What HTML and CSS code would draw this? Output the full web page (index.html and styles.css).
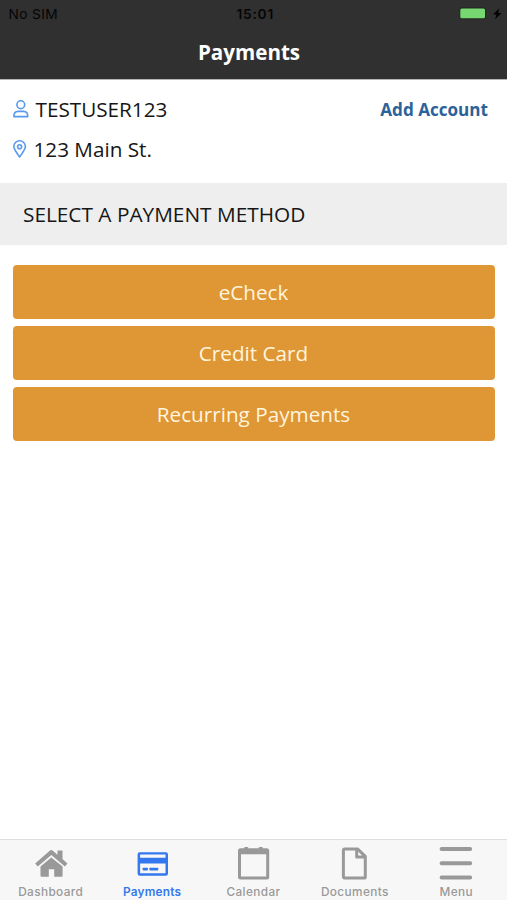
FILE: index.html
```html
<!DOCTYPE html>
<html lang="en">
<head>
<meta charset="utf-8">
<title>Payments</title>
<link rel="stylesheet" href="styles.css">
</head>
<body>
<div class="screen">
  <header class="header">
    <div class="status">
      <span class="carrier">No SIM</span>
      <span class="clock">15:01</span>
      <span class="power">
        <svg width="43" height="14" viewBox="0 0 43 14"><rect x="0" y="0" width="27" height="12.5" rx="3" fill="#252a25"/><rect x="1.3" y="1.5" width="24.7" height="9.7" rx="1.5" fill="#77d872"/><path d="M40.4 1.3 34 7.5h3.6l-1.5 4.8 6.4-6.3h-3.4z" fill="#000"/></svg>
      </span>
    </div>
    <h1 class="title">Payments</h1>
  </header>
  <section class="account">
    <div class="account-row">
      <svg class="icon-user" width="16" height="18" viewBox="0 0 16 18" fill="none" stroke="#579af0" stroke-width="1.6"><circle cx="7.8" cy="4.7" r="3.9"/><path d="M.8 16.6c0-3.6 1.8-5.2 4.3-5.2h5.4c2.5 0 4.3 1.6 4.3 5.2z" stroke-linejoin="round"/></svg>
      <span class="user-name">TESTUSER123</span>
      <a class="add-account">Add Account</a>
    </div>
    <div class="account-row">
      <svg class="icon-pin" width="14" height="18" viewBox="0 0 14 18" fill="none" stroke="#579af0" stroke-width="1.6"><path d="M6.6 17C4.5 13.7.8 9.8.8 6.6a5.8 5.8 0 0 1 11.6 0c0 3.2-3.7 7.1-5.8 10.4z" stroke-linejoin="round"/><circle cx="6.6" cy="6.7" r="2"/></svg>
      <span class="address">123 Main St.</span>
    </div>
  </section>
  <h2 class="section-title">SELECT A PAYMENT METHOD</h2>
  <main class="methods">
    <button class="method">eCheck</button>
    <button class="method">Credit Card</button>
    <button class="method">Recurring Payments</button>
  </main>
  <nav class="tabs">
    <a class="tab">
      <svg width="34" height="34" viewBox="0 0 34 34" fill="currentColor"><path d="M17.3 11.5 28.6 20.6V29.5a1.2 1.2 0 0 1-1.2 1.2h-7.2v-7.4h-5.4v7.4H7.7a1.2 1.2 0 0 1-1.2-1.2v-8.9z"/><path d="M1.2 17.4 15.4 4.9a2.8 2.8 0 0 1 3.7 0l4.4 3.8V4.4h5v8.7l4.9 4.3-2.5 3.1L17.3 9 3.7 20.5z"/></svg>
      <span>Dashboard</span>
    </a>
    <a class="tab active">
      <svg width="34" height="34" viewBox="0 0 34 34" fill="currentColor"><path fill-rule="evenodd" d="M4.8 6.3h26a2.2 2.2 0 0 1 2.2 2.2v19a2.2 2.2 0 0 1-2.2 2.2h-26a2.2 2.2 0 0 1-2.2-2.2v-19a2.2 2.2 0 0 1 2.2-2.2zM5.1 8.5v3.2h25.4V8.5zM5.1 17.6v9.7h25.4v-9.7z"/><rect x="7.7" y="21.7" width="5.2" height="2.7" rx=".6"/><rect x="14.4" y="21.7" width="8.8" height="2.7" rx=".6"/></svg>
      <span>Payments</span>
    </a>
    <a class="tab">
      <svg width="34" height="34" viewBox="0 0 34 34" fill="currentColor"><path fill-rule="evenodd" d="M4.5 2.2h3.7V1.9q0-.8.8-.8h2.5q.8 0 .8.8v.3h10.4V1.9q0-.8.8-.8H26q.8 0 .8.8v.3h3.9a2.5 2.5 0 0 1 2.5 2.5v26.2a2.5 2.5 0 0 1-2.5 2.5H4.5A2.5 2.5 0 0 1 2 30.9V4.7a2.5 2.5 0 0 1 2.5-2.5zM5 8.2v22.4h25.2V8.2z"/></svg>
      <span>Calendar</span>
    </a>
    <a class="tab">
      <svg width="34" height="34" viewBox="0 0 34 34" fill="none" stroke="currentColor" stroke-width="3" stroke-linejoin="round"><path d="M6.8 2.9h12.7L27.3 10.4v20.3a1.4 1.4 0 0 1-1.4 1.4H6.8a1.4 1.4 0 0 1-1.4-1.4V4.3a1.4 1.4 0 0 1 1.4-1.4zM18.7 3.4v7.6h8"/></svg>
      <span>Documents</span>
    </a>
    <a class="tab">
      <svg width="34" height="34" viewBox="0 0 34 34" fill="currentColor"><rect x=".7" y="1" width="32.4" height="4" rx="1.8"/><rect x=".7" y="15.3" width="32.4" height="4" rx="1.8"/><rect x=".7" y="29.5" width="32.4" height="4" rx="1.8"/></svg>
      <span>Menu</span>
    </a>
  </nav>
</div>
</body>
</html>
```
FILE: styles.css
```css
* { box-sizing: border-box; }
body { margin: 0; font-family: "Open Sans", "Noto Sans", sans-serif; }
.screen { width: 507px; height: 900px; display: flex; flex-direction: column; background: #fff; color: #161616; overflow: hidden; }
.header { height: 79px; background: #303030; }
.status { height: 27px; padding: 1px 5px 0 8.5px; display: grid; grid-template-columns: 1fr auto 1fr; align-items: center; font: 13.7px/26px Inter, sans-serif; color: #050505; }
.carrier { letter-spacing: .4px; }
.clock { font-weight: 600; letter-spacing: .8px; }
.power { justify-self: end; display: flex; }
.title { margin: 0; height: 51px; font-size: 20.6px; line-height: 51px; font-weight: 700; text-align: center; color: #fff; padding-right: 9px; }
.account { height: 103.5px; padding: 10px 19px 0 13px; border-top: 1px solid #b5b5b5; }
.account-row { height: 40px; display: flex; align-items: center; font-size: 20.7px; }
.user-name { margin: -2px 0 0 6.5px; }
.address { margin: -2px 0 0 6.5px; }
.icon-user, .icon-pin { flex: none; margin-top: -3px; }
.add-account { margin: -1px 0 0 auto; font-size: 17.1px; font-weight: 700; color: #2b6299; }
.section-title { margin: 0; height: 62.5px; padding-left: 23px; background: #eee; font-size: 20.8px; line-height: 63px; font-weight: 400; }
.methods { flex: 1; padding: 20px 12.5px; display: flex; flex-direction: column; gap: 7.5px; }
.method { height: 53.5px; flex: none; border: 0; border-radius: 4px; padding: 1px 0 0; background: #df9634; color: #fff5df; font: 20.7px/53px "Open Sans", "Noto Sans", sans-serif; }
.tabs { height: 61px; flex: none; display: grid; grid-template-columns: repeat(5, 1fr); background: #f7f7f7; border-top: 1px solid #dedede; color: #999; }
.tab { display: flex; flex-direction: column; align-items: center; padding-top: 6px; font: 500 11.8px/14px Inter, sans-serif; letter-spacing: .4px; }
.tab svg { display: block; }
.tab span { margin: 5px 0 0; white-space: nowrap; }
.tab.active { color: #3478ee; font-weight: 600; letter-spacing: .2px; }
```
